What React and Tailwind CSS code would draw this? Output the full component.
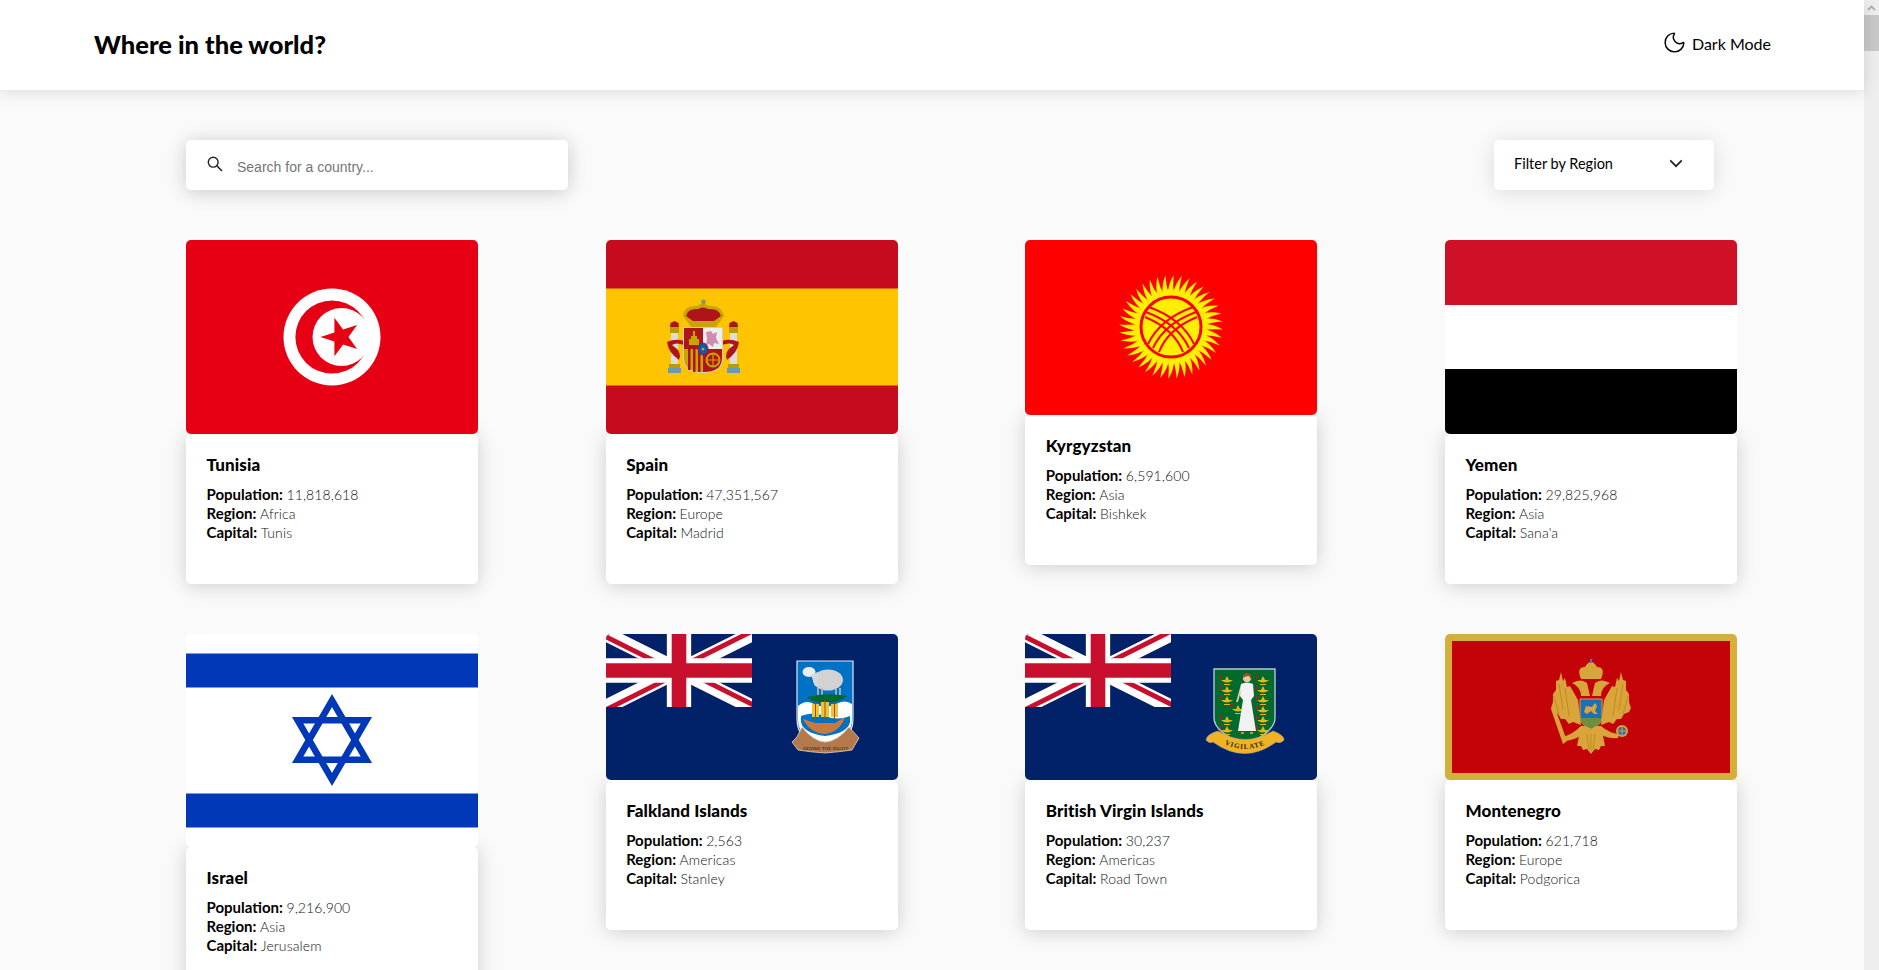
import React from 'react';
import { Moon } from 'lucide-react';

const RED_UK = '#c8102e';

function FlagFrame({ h, children, bg = 'bg-white' }) {
    return (
        <div className={`w-full overflow-hidden rounded-[5px] ${bg}`}>
            <svg width="292" height={h} viewBox={`0 0 292 ${h}`} className="block" aria-hidden="true">
                {children}
            </svg>
        </div>
    );
}

function Tunisia() {
    return (
        <FlagFrame h={194}>
            <rect width="292" height="194" fill="#e70013" />
            <circle cx="146" cy="97" r="48.5" fill="#fff" />
            <circle cx="146" cy="97" r="36.6" fill="#e70013" />
            <circle cx="155.5" cy="97" r="29" fill="#fff" />
            <polygon
                fill="#e70013"
                points="134.4,97 148.4,92.4 148.4,77.7 157.1,89.6 171.1,85.1 162.45,97 171.1,108.9 157.1,104.4 148.4,116.3 148.4,101.6"
            />
        </FlagFrame>
    );
}

function Spain() {
    return (
        <FlagFrame h={194}>
            <rect width="292" height="194" fill="#c60b1e" />
            <rect y="48.5" width="292" height="97" fill="#ffc400" />
            {/* pillars */}
            {[64, 123].map((x) => (
                <g key={x}>
                    <rect x={x + 1} y="92" width="7" height="33" fill="#dcdcdc" />
                    <rect x={x} y="87" width="9" height="6" fill="#b89a10" />
                    <path d={`M${x},87 l0.5,-4 l4,-2 l4,2 l0.5,4 z`} fill="#ad1519" />
                    <rect x={x - 1} y="124" width="11" height="4" fill="#b89a10" />
                    <rect x={x - 2} y="128" width="13" height="5" fill="#6a9ab5" />
                </g>
            ))}
            {/* ribbons */}
            <path d="M61,102 Q70,98 78,101 L78,105 Q70,102 66,105 Q77,112 73,120 Q62,112 61,102 Z" fill="#ad1519" />
            <path d="M133,102 Q124,98 116,101 L116,105 Q124,102 128,105 Q117,112 121,120 Q132,112 133,102 Z" fill="#ad1519" />
            {/* crown */}
            <path d="M77,76 Q78,65 91,66 Q97,61 103,66 Q116,65 118,76 L110,87 H85 Z" fill="#c8a500" />
            <path d="M80,76 Q82,68 92,69 Q97,66 102,69 Q113,68 115,76 L108,81 H87 Z" fill="#ad1519" />
            <rect x="85" y="82" width="25" height="5" fill="#c8a500" />
            <circle cx="97.5" cy="62" r="2.4" fill="#8a9a5b" />
            {/* shield */}
            <path d="M77,87 H117 V118 Q117,133 97,133 Q77,133 77,118 Z" fill="#ccc" />
            <path d="M78,88 H97 V109 H78 Z" fill="#ad1519" />
            <path d="M97,88 H116 V109 H97 Z" fill="#eee" />
            <path d="M78,109 H97 V132 Q78,132 78,118 Z" fill="#c8a500" />
            <path d="M97,109 H116 V118 Q116,132 97,132 Z" fill="#ad1519" />
            <path d="M82,109 h2.5 v21 h-2.5 z M87,109 h2.5 v23 h-2.5 z M92,109 h2.5 v23 h-2.5 z" fill="#ad1519" />
            <path d="M83,105 v-6 h2 v-3 h2 v-5 h2 v5 h2 v3 h2 v6 z" fill="#c8a500" />
            <path d="M100,92 l5,-1 2,3 4,-2 -1,6 3,6 -5,-1 -1,4 -4,-3 -3,1 1,-6 z" fill="#d18ab0" />
            <circle cx="107" cy="120" r="6.5" fill="none" stroke="#c8a500" strokeWidth="2" />
            <path d="M101,120 h13 M107,114 v13" stroke="#c8a500" strokeWidth="1.2" />
            <ellipse cx="97" cy="109" rx="5" ry="6" fill="#005bbf" stroke="#ad1519" strokeWidth="1" />
            <circle cx="97" cy="109" r="1.5" fill="#c8a500" />
        </FlagFrame>
    );
}

function Kyrgyzstan() {
    const rays = Array.from({ length: 40 }, (_, i) => i * 9);
    return (
        <FlagFrame h={175}>
            <rect width="292" height="175" fill="#ff0000" />
            <g transform="translate(146 87)">
                {rays.map((deg) => (
                    <path
                        key={deg}
                        transform={`rotate(${deg})`}
                        d="M-3.4,-31 Q-3.4,-42 2.6,-52 Q1.4,-41 3.4,-31 Z"
                        fill="#ffef00"
                    />
                ))}
                <circle r="34.5" fill="#ffef00" />
                <circle r="30" fill="none" stroke="#ff0000" strokeWidth="3" />
                <g fill="none" stroke="#ff0000" strokeWidth="2">
                    <path d="M-23,17 Q-11,-8 22,-20 M-18,21 Q-7,-3 25,-15 M-12,25 Q-3,2 26,-10" />
                    <path d="M23,17 Q11,-8 -22,-20 M18,21 Q7,-3 -25,-15 M12,25 Q3,2 -26,-10" />
                </g>
            </g>
        </FlagFrame>
    );
}

function Yemen() {
    return (
        <FlagFrame h={194}>
            <rect width="292" height="65" fill="#ce1126" />
            <rect y="65" width="292" height="64" fill="#fff" />
            <rect y="129" width="292" height="65" fill="#000" />
        </FlagFrame>
    );
}

function Israel() {
    return (
        <FlagFrame h={213}>
            <rect width="292" height="213" fill="#fff" />
            <rect y="19.5" width="292" height="34" fill="#0038b8" />
            <rect y="159.5" width="292" height="34" fill="#0038b8" />
            <g fill="none" stroke="#0038b8" strokeWidth="6.5">
                <polygon points="146,66.5 180.4,125.75 111.6,125.75" />
                <polygon points="146,145.5 180.4,86.25 111.6,86.25" />
            </g>
        </FlagFrame>
    );
}

function UnionJack({ id }) {
    return (
        <svg x="0" y="0" width="146" height="73" viewBox="0 0 60 30">
            <clipPath id={id}>
                <path d="M30,15 h30 v15 z v15 h-30 z h-30 v-15 z v-15 h30 z" />
            </clipPath>
            <rect width="60" height="30" fill="#012169" />
            <path d="M0,0 L60,30 M60,0 L0,30" stroke="#fff" strokeWidth="6" />
            <path d="M0,0 L60,30 M60,0 L0,30" clipPath={`url(#${id})`} stroke={RED_UK} strokeWidth="4" />
            <path d="M30,0 v30 M0,15 h60" stroke="#fff" strokeWidth="10" />
            <path d="M30,0 v30 M0,15 h60" stroke={RED_UK} strokeWidth="6" />
        </svg>
    );
}

function Falkland() {
    return (
        <FlagFrame h={146}>
            <rect width="292" height="146" fill="#012169" />
            <UnionJack id="jack-falkland" />
            <path d="M191,27 H247 V85 Q247,108 219,112 Q191,108 191,85 Z" fill="#0072c6" stroke="#dfe7f2" strokeWidth="1.2" />
            {/* sheep */}
            <ellipse cx="222" cy="46" rx="15" ry="10.5" fill="#d2d2d2" />
            <ellipse cx="203" cy="38" rx="6.5" ry="5" fill="#ececec" />
            <path d="M205,41 L212,38 V52 H209 Z" fill="#d8d8d8" />
            <path d="M212,54 v7 M216,54 v7 M230,54 v7 M234,54 v7" stroke="#bdbdbd" strokeWidth="1.6" />
            <path d="M201,63 Q219,58 241,62 Q232,70 219,68 Q207,70 201,63 Z" fill="#006a2e" />
            {/* waves and ship */}
            <path d="M192,72 Q200,65 208,70 Q219,76 230,70 Q239,65 246,70 V86 Q246,104 219,110 Q192,104 192,86 Z" fill="#fff" />
            <path d="M195,82 Q207,77 219,82 Q232,87 244,82 V88 Q242,99 219,102 Q197,99 195,88 Z" fill="#0072c6" />
            <path d="M206,70 h7 v13 h-7 z M215,68 h8 v15 h-8 z M225,70 h7 v13 h-7 z" fill="#f2c230" />
            <path d="M219,66 v24 M209.5,68 v18 M228.5,68 v18" stroke="#a04a20" strokeWidth="1" />
            <path d="M197,85 L209,89 H229 L239,83 Q234,98 219,100 Q204,99 197,85 Z" fill="#c87a3e" />
            {/* scroll */}
            <path d="M191,103 L196,93 Q207,107 219,108 Q232,107 243,93 L253,104 L246,116 Q232,118 219,119 Q204,118 192,116 L186,108 Z" fill="#b5794e" stroke="#e5d6c8" strokeWidth="0.8" />
            <text x="219.5" y="116" textAnchor="middle" fontSize="5" fontFamily="'Liberation Serif', serif" fill="#2b1a10">
                DESIRE THE RIGHT
            </text>
        </FlagFrame>
    );
}

function Lamp({ x, y }) {
    return (
        <g>
            <path d={`M${x - 6},${y} Q${x},${y + 5} ${x + 6},${y} Z`} fill="#e3b520" />
            <path d={`M${x - 2},${y} L${x},${y - 4} L${x + 2},${y} M${x - 3},${y + 4} h6 v1 h-6 z`} fill="#e3b520" />
            <rect x={x - 7} y={y - 5} width="1.5" height="4" fill="#c8102e" />
        </g>
    );
}

function VirginIslands() {
    const leftLamps = [46, 56, 66, 86, 96];
    const rightLamps = [46, 56, 66, 76, 86, 96];
    return (
        <FlagFrame h={146}>
            <rect width="292" height="146" fill="#012169" />
            <UnionJack id="jack-bvi" />
            <path d="M189,35 H250 V84 Q250,98 220,111 Q189,98 189,84 Z" fill="#006b2d" stroke="#b9c4d4" strokeWidth="1.4" />
            {leftLamps.map((y) => <Lamp key={y} x={202} y={y} />)}
            {rightLamps.map((y) => <Lamp key={y} x={238} y={y} />)}
            <Lamp x={213} y={75} />
            {/* virgin */}
            <path d="M217,50 L212,68" stroke="#e8c8a8" strokeWidth="1.8" />
            <path d="M216,50 Q222,47 228,50 L229,62 L226,66 L231,97 H213 L218,66 L215,62 Z" fill="#f2f2f2" />
            <circle cx="222" cy="44" r="4.2" fill="#e8c8a8" />
            <path d="M218,44 Q218,39 222,39 Q227,39 226.5,46 L224,42 Q220,42 218,44 Z" fill="#9a5218" />
            <path d="M216,98 h3 v2 h-3 z M225,98 h3 v2 h-3 z" fill="#c79a2a" />
            {/* motto */}
            <path d="M181,106 Q182,100 193,97 Q220,114 248,97 Q259,101 259,106 Q256,110 251,108 Q220,131 188,108 Q184,110 181,106 Z" fill="#f0b323" stroke="#a9a9b5" strokeWidth="0.6" />
            <path id="vigilate-arc" d="M192,106 Q220,124 248,106" fill="none" />
            <text fontSize="7" fontWeight="700" letterSpacing="1" fontFamily="'Liberation Serif', serif" fill="#2b2410">
                <textPath href="#vigilate-arc" startOffset="50%" textAnchor="middle">VIGILATE</textPath>
            </text>
        </FlagFrame>
    );
}

function Montenegro() {
    return (
        <FlagFrame h={146}>
            <rect width="292" height="146" fill="#d4af3a" />
            <rect x="7" y="7" width="278" height="132" fill="#c40308" />
            <g fill="#d9a53a">
                {/* crown */}
                <path d="M136,45 Q131,33 140,33 Q143,28 146,28 Q149,28 152,33 Q161,33 156,45 Z" />
                <rect x="145" y="25" width="2" height="4" fill="#3f82c4" />
                {/* heads */}
                <path d="M127,49 Q136,44 142,49 L145,62 H136 Q136,53 127,49 Z" />
                <path d="M165,49 Q156,44 150,49 L147,62 H156 Q156,53 165,49 Z" />
                {/* wings */}
                <path d="M116,38 L118,47 L120,44 L122,53 L125,52 L133,66 L136,91 L128,88 L124,90 L120,85 L116,85 L113,80 L108,78 L106,74 L108,68 L108,60 L111,56 L111,47 L114,46 Z" />
                <path d="M176,38 L174,47 L172,44 L170,53 L167,52 L159,66 L156,91 L164,88 L168,90 L172,85 L176,85 L179,80 L184,78 L186,74 L184,68 L184,60 L181,56 L181,47 L178,46 Z" />
                {/* tail and legs */}
                <path d="M136,92 H156 L160,112 L156,112 L154,116 L150,115 L146,120 L142,115 L138,116 L136,112 L132,112 Z" />
                <path d="M136,92 Q128,100 118,103 L120,107 Q132,106 140,98 Z" />
                <path d="M156,92 Q164,99 174,100 L173,104 Q160,105 152,98 Z" />
                {/* sceptre */}
                <path d="M106,75 L110,74 L122,107 L118,110 Z" />
            </g>
            <path
                d="M114,50 L118,76 M120,54 L124,82 M109,62 L114,80 M178,50 L174,76 M172,54 L168,82 M183,62 L178,80 M142,100 L144,116 M146,100 V117 M150,100 L148,116"
                stroke="#b88420"
                strokeWidth="0.8"
                fill="none"
            />
            <path d="M135,65 H157 V84 Q157,90 146,95 Q135,90 135,84 Z" fill="#1d6fb5" stroke="#d9a53a" strokeWidth="1" />
            <path d="M135.5,84 H156.5 Q156,90 146,94.5 Q136,90 135.5,84 Z" fill="#6b8f3a" />
            <path d="M139,78 L141,72 L147,73 L150,69 L152,72 L150,77 L153,80 H149 L146,77 L142,80 Z" fill="#d9a53a" />
            <circle cx="177" cy="97" r="6" fill="#d9a53a" />
            <circle cx="177" cy="97" r="4.2" fill="#2a6fb0" />
            <path d="M177,92 v10 M172,97 h10" stroke="#d9a53a" strokeWidth="1" />
        </FlagFrame>
    );
}

const countries = [
    { name: 'Tunisia', population: '11,818,618', region: 'Africa', capital: 'Tunis', Flag: Tunisia },
    { name: 'Spain', population: '47,351,567', region: 'Europe', capital: 'Madrid', Flag: Spain },
    { name: 'Kyrgyzstan', population: '6,591,600', region: 'Asia', capital: 'Bishkek', Flag: Kyrgyzstan },
    { name: 'Yemen', population: '29,825,968', region: 'Asia', capital: "Sana'a", Flag: Yemen },
    { name: 'Israel', population: '9,216,900', region: 'Asia', capital: 'Jerusalem', Flag: Israel },
    { name: 'Falkland Islands', population: '2,563', region: 'Americas', capital: 'Stanley', Flag: Falkland },
    { name: 'British Virgin Islands', population: '30,237', region: 'Americas', capital: 'Road Town', Flag: VirginIslands },
    { name: 'Montenegro', population: '621,718', region: 'Europe', capital: 'Podgorica', Flag: Montenegro },
];

function Stat({ label, value }) {
    return (
        <p className="text-[14px] leading-[19px]">
            <span className="text-[15px] font-bold text-black">{label}:</span>{' '}
            <span className="font-light tracking-[0.1px] text-[#111]">{value}</span>
        </p>
    );
}

function CountryCard({ country }) {
    const { Flag } = country;
    return (
        <div className="w-[292px]">
            <Flag />
            <div className="h-[150px] rounded-[5px] bg-white pl-[20.5px] pr-[21px] pt-[20px] shadow-[0_2px_20px_rgba(0,0,0,0.18)]">
                <h2 className="text-[17px] leading-[22px] font-black tracking-[0.1px] text-black">{country.name}</h2>
                <div className="mt-[9px]">
                    <Stat label="Population" value={country.population} />
                    <Stat label="Region" value={country.region} />
                    <Stat label="Capital" value={country.capital} />
                </div>
            </div>
        </div>
    );
}

function Scrollbar() {
    return (
        <div className="h-full w-[15px] shrink-0 bg-[#eeeeee]">
            <div className="flex h-[15px] items-center justify-center">
                <svg width="9" height="6" viewBox="0 0 9 6" aria-hidden="true">
                    <path d="M1,5 L4.5,1.5 L8,5" fill="none" stroke="#b0b0b0" strokeWidth="1.8" />
                </svg>
            </div>
            <div className="h-[36px] bg-[#c8c8c8]" />
        </div>
    );
}

export default function App() {
    return (
        <div className="flex h-screen overflow-hidden bg-[#fafafa] font-['Lato','Noto_Sans',sans-serif] text-black">
            <div className="min-w-0 flex-1">
                <header className="relative z-10 flex h-[90px] items-center justify-between bg-white pl-[94px] pr-[93px] shadow-[0_2px_15px_rgba(0,0,0,0.13)]">
                    <h1 className="text-[25.5px] leading-none font-black">Where in the world?</h1>
                    <button type="button" className="-mt-[2px] flex items-center gap-[5px] text-[16px] leading-none">
                        <Moon size={25} strokeWidth={1.4} className="-mt-[3px]" />
                        <span>Dark Mode</span>
                    </button>
                </header>

                <main className="pl-[186px] pr-[127px] pt-[50px]">
                    <div className="flex items-start justify-between pr-[23px]">
                        <label className="flex h-[50px] w-[382px] items-center rounded-[5px] bg-white pl-[21px] shadow-[0_2px_20px_rgba(0,0,0,0.2)]">
                            <svg width="16" height="16" viewBox="0 0 16 16" className="-mt-[3px] shrink-0" aria-hidden="true">
                                <circle cx="6.2" cy="6.2" r="4.9" fill="none" stroke="#222" strokeWidth="1.4" />
                                <path d="M9.8,9.8 L15,15" stroke="#222" strokeWidth="1.6" />
                            </svg>
                            <input
                                type="text"
                                placeholder="Search for a country..."
                                className="ml-[14px] mt-[4px] w-[300px] bg-transparent font-['Liberation_Sans',sans-serif] text-[14px] outline-none placeholder:text-[#757575]"
                            />
                        </label>
                        <button
                            type="button"
                            className="flex h-[50px] w-[220px] items-center justify-between rounded-[5px] bg-white pb-[3px] pl-[20px] pr-[31px] text-[14.5px] shadow-[0_2px_20px_rgba(0,0,0,0.13)]"
                        >
                            <span>Filter by Region</span>
                            <svg width="14" height="9" viewBox="0 0 14 9" aria-hidden="true">
                                <path d="M1.2,1.4 L7,7.2 L12.8,1.4" fill="none" stroke="#222" strokeWidth="1.7" />
                            </svg>
                        </button>
                    </div>

                    <div className="mt-[50px] grid grid-cols-[repeat(4,292px)] items-start justify-between gap-y-[50px]">
                        {countries.map((country) => (
                            <CountryCard key={country.name} country={country} />
                        ))}
                    </div>
                </main>
            </div>
            <Scrollbar />
        </div>
    );
}
